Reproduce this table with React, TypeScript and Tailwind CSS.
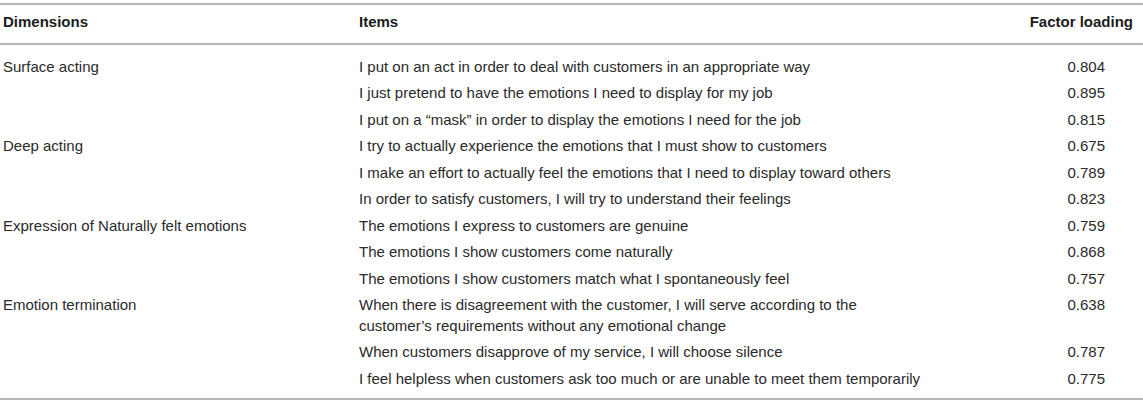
const rows = [
  { dimension: "Surface acting", item: "I put on an act in order to deal with customers in an appropriate way", loading: "0.804" },
  { dimension: "", item: "I just pretend to have the emotions I need to display for my job", loading: "0.895" },
  { dimension: "", item: "I put on a \u201cmask\u201d in order to display the emotions I need for the job", loading: "0.815" },
  { dimension: "Deep acting", item: "I try to actually experience the emotions that I must show to customers", loading: "0.675" },
  { dimension: "", item: "I make an effort to actually feel the emotions that I need to display toward others", loading: "0.789" },
  { dimension: "", item: "In order to satisfy customers, I will try to understand their feelings", loading: "0.823" },
  { dimension: "Expression of Naturally felt emotions", item: "The emotions I express to customers are genuine", loading: "0.759" },
  { dimension: "", item: "The emotions I show customers come naturally", loading: "0.868" },
  { dimension: "", item: "The emotions I show customers match what I spontaneously feel", loading: "0.757" },
  {
    dimension: "Emotion termination",
    item: "When there is disagreement with the customer, I will serve according to the customer\u2019s requirements without any emotional change",
    loading: "0.638",
  },
  { dimension: "", item: "When customers disapprove of my service, I will choose silence", loading: "0.787" },
  { dimension: "", item: "I feel helpless when customers ask too much or are unable to meet them temporarily", loading: "0.775" },
];

export default function App() {
  return (
    <div className="w-[1143px] h-[402px] bg-white pt-[3px] font-['Liberation_Sans',Arial,sans-serif] text-[15px] leading-[20.5px] text-[#2a2a2a]">
      {/* Header */}
      <div className="grid grid-cols-[359px_563px_1fr] border-y-2 border-[#b8b8b8] pt-[7px] pb-[10px] font-bold text-[#1c1c1c]">
        <div className="pl-[3px]">Dimensions</div>
        <div>Items</div>
        <div className="pr-[10px] text-right">Factor loading</div>
      </div>

      {/* Body */}
      <div className="border-b-2 border-[#b8b8b8] pt-[9px] pb-[6px]">
        {rows.map((row, i) => (
          <div key={i} className="grid grid-cols-[359px_563px_1fr] py-[3px]">
            <div className="pl-[3px]">{row.dimension}</div>
            <div>{row.item}</div>
            <div className="pr-[38px] text-right">{row.loading}</div>
          </div>
        ))}
      </div>
    </div>
  );
}
